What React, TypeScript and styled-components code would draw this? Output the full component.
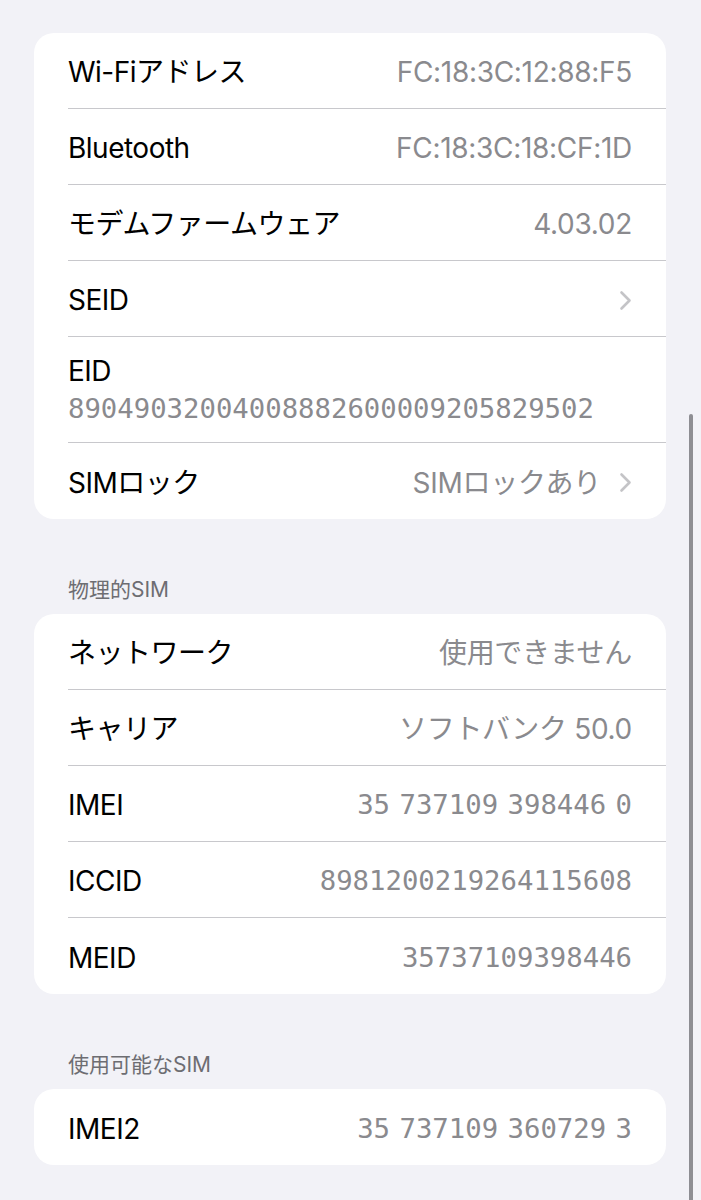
import React from "react";
import styled, { createGlobalStyle } from "styled-components";

const GlobalStyle = createGlobalStyle`
  html, body {
    margin: 0;
    padding: 0;
    background: #f2f2f7;
  }
  body {
    font-family: "Inter", "Noto Sans CJK JP", sans-serif;
    -webkit-font-smoothing: antialiased;
  }
`;

const Page = styled.div`
  min-height: 1200px;
  box-sizing: border-box;
  padding: 33px 35px 40px 34px;
  background: #f2f2f7;
  display: flex;
  flex-direction: column;
`;

const Section = styled.section<{ $first?: boolean }>`
  display: flex;
  flex-direction: column;
  margin-top: ${(p) => (p.$first ? "0" : "58px")};
`;

const SectionHeader = styled.div`
  padding: 0 0 11px 34px;
  font-size: 21px;
  line-height: 26px;
  color: #6d6d72;
  font-family: "Inter", "Noto Sans CJK JP", sans-serif;
`;

const Card = styled.div`
  background: #ffffff;
  border-radius: 20px;
  overflow: hidden;
  display: flex;
  flex-direction: column;
`;

const Row = styled.div`
  padding-left: 34px;
  &:last-child > div {
    border-bottom: none;
  }
`;

const RowInner = styled.div<{ $stacked?: boolean }>`
  box-sizing: border-box;
  min-height: 76px;
  padding-right: 34px;
  border-bottom: 1px solid #c8c8cc;
  display: flex;
  flex-direction: ${(p) => (p.$stacked ? "column" : "row")};
  align-items: ${(p) => (p.$stacked ? "flex-start" : "center")};
  justify-content: ${(p) => (p.$stacked ? "center" : "space-between")};
  padding-top: ${(p) => (p.$stacked ? "17px" : "3px")};
  padding-bottom: ${(p) => (p.$stacked ? "12px" : "0")};
`;

const Label = styled.span`
  font-size: 28px;
  line-height: 34px;
  color: #000000;
  white-space: nowrap;
  letter-spacing: -0.5px;
`;

const ValueWrap = styled.div`
  display: flex;
  align-items: center;
  gap: 18px;
`;

const Value = styled.span<{ $mono?: boolean }>`
  font-family: ${(p) =>
    p.$mono
      ? `"DejaVu Sans Mono", "Liberation Mono", monospace`
      : `"Inter", "Noto Sans CJK JP", sans-serif`};
  font-size: ${(p) => (p.$mono ? "27.3px" : "28px")};
  line-height: 34px;
  color: #8a8a8e;
  white-space: nowrap;
  word-spacing: ${(p) => (p.$mono ? "-7px" : "normal")};
  letter-spacing: ${(p) => (p.$mono ? "0" : "-0.3px")};
`;

const StackedValue = styled(Value)`
  line-height: 42px;
`;

const Chevron = styled.svg`
  width: 13px;
  height: 21px;
  flex-shrink: 0;
`;

const ScrollIndicator = styled.div`
  position: fixed;
  right: 8px;
  top: 414px;
  width: 4px;
  height: 800px;
  border-radius: 2px;
  background: #8e8e93;
`;

type Item = {
  label: string;
  value?: string;
  mono?: boolean;
  chevron?: boolean;
  stacked?: boolean;
};

const ChevronIcon = () => (
  <Chevron viewBox="0 0 13 21" fill="none">
    <path
      d="M2.5 2.5 L10.5 10.5 L2.5 18.5"
      stroke="#c4c4c7"
      strokeWidth="2.6"
      strokeLinecap="round"
      strokeLinejoin="round"
    />
  </Chevron>
);

const ListRow = ({ item }: { item: Item }) => {
  if (item.stacked) {
    return (
      <Row>
        <RowInner $stacked>
          <Label>{item.label}</Label>
          <StackedValue $mono={item.mono}>{item.value}</StackedValue>
        </RowInner>
      </Row>
    );
  }
  return (
    <Row>
      <RowInner>
        <Label>{item.label}</Label>
        <ValueWrap>
          {item.value && <Value $mono={item.mono}>{item.value}</Value>}
          {item.chevron && <ChevronIcon />}
        </ValueWrap>
      </RowInner>
    </Row>
  );
};

const sections: { header?: string; items: Item[] }[] = [
  {
    items: [
      { label: "Wi-Fiアドレス", value: "FC:18:3C:12:88:F5" },
      { label: "Bluetooth", value: "FC:18:3C:18:CF:1D" },
      { label: "モデムファームウェア", value: "4.03.02" },
      { label: "SEID", chevron: true },
      {
        label: "EID",
        value: "89049032004008882600009205829502",
        mono: true,
        stacked: true,
      },
      { label: "SIMロック", value: "SIMロックあり", chevron: true },
    ],
  },
  {
    header: "物理的SIM",
    items: [
      { label: "ネットワーク", value: "使用できません" },
      { label: "キャリア", value: "ソフトバンク 50.0" },
      { label: "IMEI", value: "35 737109 398446 0", mono: true },
      { label: "ICCID", value: "8981200219264115608", mono: true },
      { label: "MEID", value: "35737109398446", mono: true },
    ],
  },
  {
    header: "使用可能なSIM",
    items: [{ label: "IMEI2", value: "35 737109 360729 3", mono: true }],
  },
];

export default function App() {
  return (
    <>
      <GlobalStyle />
      <Page>
        {sections.map((s, i) => (
          <Section key={i} $first={i === 0}>
            {s.header && <SectionHeader>{s.header}</SectionHeader>}
            <Card>
              {s.items.map((item) => (
                <ListRow key={item.label} item={item} />
              ))}
            </Card>
          </Section>
        ))}
      </Page>
      <ScrollIndicator />
    </>
  );
}
